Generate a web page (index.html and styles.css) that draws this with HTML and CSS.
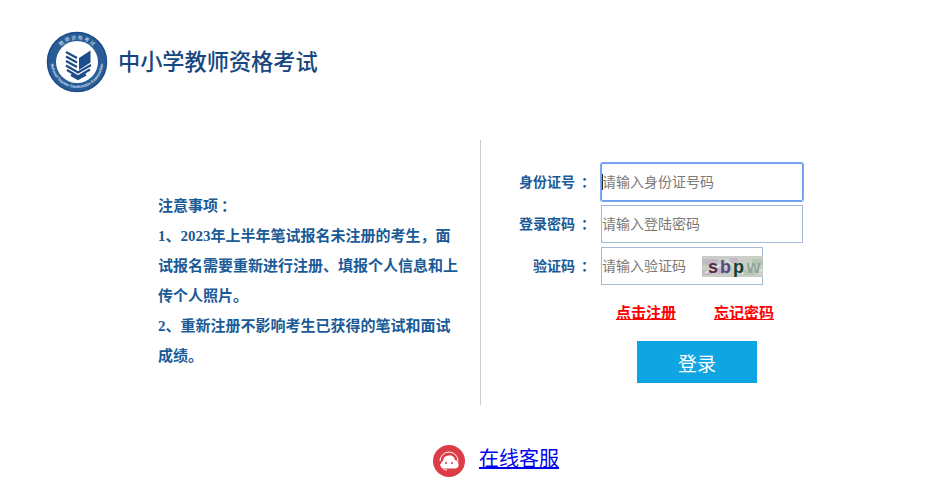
FILE: index.html
```html
<!DOCTYPE html>
<html lang="zh-CN">
<head>
    <meta charset="UTF-8">
    <title>中小学教师资格考试</title>
    <link rel="stylesheet" href="styles.css">
</head>
<body>
    <header class="header">
        <svg class="logo" viewBox="0 0 62 62" width="62" height="62">
            <defs>
                <path id="arcTop" d="M8.500 31a22.500 22.500 0 0 1 45 0"/>
                <path id="arcBottom" d="M5 31a26 26 0 0 0 52 0"/>
            </defs>
            <circle cx="31" cy="31" r="29.500" fill="#2a5c96" stroke="#1c4d8a" stroke-width="1.500"/>
            <circle cx="31" cy="31" r="21" fill="#fff"/>
            <text class="seal-text"><textPath href="#arcTop" startOffset="50%" text-anchor="middle">教 师 资 格 考 试</textPath></text>
            <text class="seal-text-en"><textPath href="#arcBottom" startOffset="50%" text-anchor="middle">National Teacher Certification Examination</textPath></text>
            <path d="M33 27 44.500 19.500v12L33 39z" fill="#1c4d8a"/>
            <path d="M20 21 31 27M20 25.500 31 31.500M20 30 31 36M20 34.500 32 41.500 45 34M21 39 32 45.500 44 38.500M25 44 32 48 40 43.500" fill="none" stroke="#1c4d8a" stroke-width="2.200"/>
        </svg>
        <h1 class="site-title">中小学教师资格考试</h1>
    </header>

    <main class="main">
        <section class="notes">
            <p>注意事项<span class="colon">：</span></p>
            <p>1、2023年上半年笔试报名未注册的考生，面试报名需要重新进行注册、填报个人信息和上传个人照片。</p>
            <p>2、重新注册不影响考生已获得的笔试和面试成绩。</p>
        </section>

        <form class="login">
            <div class="row">
                <label class="row-label" for="idNumber">身份证号<span class="colon">：</span></label>
                <input class="field" type="text" id="idNumber" placeholder="请输入身份证号码" autofocus>
            </div>
            <div class="row">
                <label class="row-label" for="password">登录密码<span class="colon">：</span></label>
                <input class="field" type="password" id="password" placeholder="请输入登陆密码">
            </div>
            <div class="row">
                <label class="row-label" for="captcha">验证码<span class="colon">：</span></label>
                <div class="captcha-box">
                    <input class="captcha-input" type="text" id="captcha" placeholder="请输入验证码">
                    <svg class="captcha" viewBox="0 0 61 21" width="61" height="21">
                        <rect width="61" height="21" fill="#c9cfc6"/>
                        <path d="M0 3h16v6H0zM0 14h10v5H0zM14 12h12v6H14zM28 2h8v5h-8z" fill="#c3b8c6"/>
                        <path d="M40 14h13v5H40zM50 3h11v6H50z" fill="#b5c4b4"/>
                        <path d="M3 17 20 8M24 4 42 18M44 8 60 15" stroke="#e4e6e0" stroke-width="1.500"/>
                        <text class="captcha-text" x="6" y="16.500" fill="#5b2b45">s</text>
                        <text class="captcha-text" x="18" y="16.500" fill="#574a80">b</text>
                        <text class="captcha-text" x="31" y="16.500" fill="#123f33">p</text>
                        <text class="captcha-text" x="44.500" y="16.500" fill="#90a596">w</text>
                    </svg>
                </div>
            </div>
            <div class="links">
                <a class="link" href="#">点击注册</a>
                <a class="link" href="#">忘记密码</a>
            </div>
            <button class="submit" type="button">登录</button>
        </form>
    </main>

    <footer class="footer">
        <svg class="service-icon" viewBox="0 0 32 32" width="32" height="32">
            <circle cx="16" cy="16" r="16" fill="#dc3c46"/>
            <path d="M10.500 23.500a4 4 0 0 1-.5-7.500 6.100 6.100 0 0 1 12-1 4.500 4.500 0 0 1 1 8.500z" fill="#fff"/>
            <path d="M7 16a9 9 0 0 1 18 0" fill="none" stroke="#fff" stroke-width="1"/>
            <path d="M7.500 19c.5 3.500 3 6 6.500 6" fill="none" stroke="#fff" stroke-width="1"/>
            <circle cx="13" cy="18" r="1" fill="#dc3c46"/>
            <circle cx="19" cy="18" r="1" fill="#dc3c46"/>
        </svg>
        <a class="service-link" href="#">在线客服</a>
    </footer>
</body>
</html>
```

FILE: styles.css
```css
body {
    margin: 0;
    background-color: #fff;
    font-family: "Liberation Serif", "Noto Sans CJK SC", serif;
}

.header {
    display: flex;
    align-items: flex-start;
    gap: 10px;
    padding: 31px 0 0 46px;
}

.logo {
    display: block;
}

.seal-text {
    font-family: "Noto Sans CJK SC", sans-serif;
    font-size: 5px;
    fill: #dfe8f3;
}

.seal-text-en {
    font-family: "Liberation Sans", sans-serif;
    font-size: 3.800px;
    font-weight: bold;
    fill: #dfe8f3;
}

.site-title {
    margin: 0;
    font-family: "Noto Sans CJK SC", sans-serif;
    font-size: 22.200px;
    font-weight: 500;
    line-height: 58px;
    color: #17477f;
}

.main {
    display: flex;
    margin-top: 47px;
    height: 265px;
}

.notes {
    box-sizing: border-box;
    width: 481px;
    padding: 51px 17px 0 158px;
    border-right: 1px solid #ccc;
    font-size: 15px;
    font-weight: bold;
    line-height: 30px;
    color: #1a5a96;
}

.notes p {
    margin: 0;
}

.notes .colon {
    margin: 0 -3px 0 3px;
}

.login {
    padding-top: 23px;
}

.row {
    display: flex;
    align-items: center;
    height: 38px;
    margin-bottom: 4px;
}

.row-label {
    width: 108px;
    margin: 0 12px 2px 0;
    text-align: right;
    font-size: 14px;
    font-weight: bold;
    color: #1a5a96;
}

.row-label .colon {
    margin: 0 -6px 0 6px;
}

.field,
.captcha-input {
    box-sizing: border-box;
    padding: 0 0 2px;
    font-family: "Noto Sans CJK SC", sans-serif;
    font-size: 14px;
    color: #333;
}

.field {
    width: 202px;
    height: 38px;
    border: 1px solid #a3b9d6;
}

.field:focus {
    outline: none;
    border-color: #6d9eeb;
    border-radius: 2px;
    box-shadow: 0 0 0 1px #7aa7ee;
    background: linear-gradient(#222, #222) no-repeat 0 50% / 1px 16px;
}

.field::placeholder,
.captcha-input::placeholder {
    color: #7a7a7a;
}

.captcha-box {
    box-sizing: border-box;
    display: flex;
    align-items: center;
    width: 162px;
    height: 38px;
    border: 1px solid #a3b9d6;
}

.captcha-input {
    width: 100px;
    height: 36px;
    border: 0;
    outline: none;
}

.captcha {
    flex: none;
}

.captcha-text {
    font-family: "Liberation Sans", sans-serif;
    font-size: 18px;
    font-weight: bold;
}

.links {
    display: flex;
    gap: 38px;
    height: 47px;
    margin-top: -4px;
    padding: 9px 0 0 135px;
    line-height: 38px;
}

.link {
    font-size: 15px;
    font-weight: bold;
    color: #f00;
}

.submit {
    display: block;
    width: 120px;
    height: 42px;
    margin: 0 0 0 156px;
    border: 0;
    background-color: #0ea5e2;
    font-family: "Noto Sans CJK SC", sans-serif;
    font-size: 19px;
    color: #fff;
}

.footer {
    display: flex;
    align-items: flex-start;
    gap: 14px;
    margin-top: 40px;
    padding-left: 433px;
}

.service-icon {
    display: block;
}

.service-link {
    font-size: 20px;
    line-height: 28px;
    color: #00e;
}
```
